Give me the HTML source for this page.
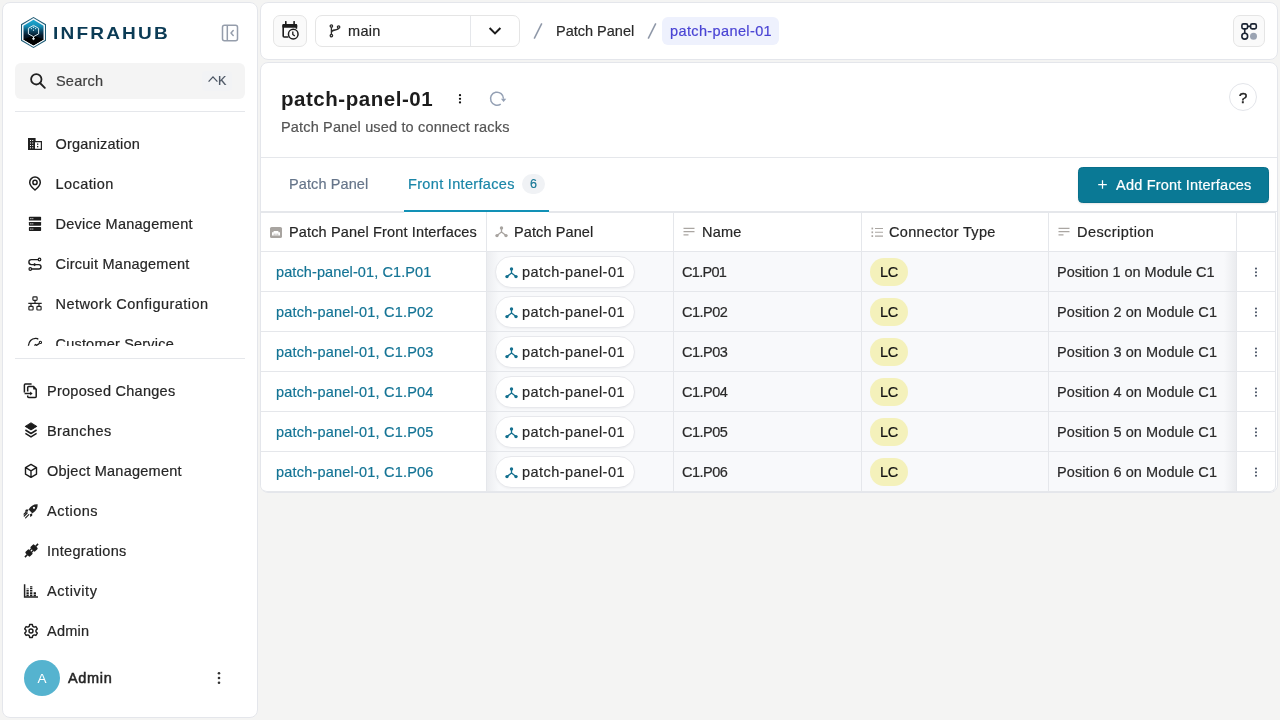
<!DOCTYPE html>
<html><head><meta charset="utf-8">
<style>
*{box-sizing:border-box;margin:0;padding:0}
html,body{width:1280px;height:720px;overflow:hidden}
body{background:#f4f4f3;font-family:"Liberation Sans",sans-serif;color:#262626;position:relative;font-size:14px}
#root{position:absolute;left:0;top:0;width:1280px;height:720px;will-change:transform}
.abs{position:absolute}
.card{position:absolute;background:#fff;border:1px solid #e4e6eb;border-radius:8px;overflow:hidden}
.t{position:absolute;white-space:nowrap;line-height:1;-webkit-text-stroke-width:0.2px}
svg{position:absolute;display:block}
.th{font-size:14.5px;color:#262626;letter-spacing:0.1px}
.td{font-size:14.5px;color:#2a2a2a;letter-spacing:0.1px}
.link{color:#147495}
.nav{font-size:14.5px;color:#262626}
</style></head><body><div id="root">
<!-- SIDEBAR -->
<div class="card" style="left:2px;top:2px;width:256px;height:716px;"></div>
<!-- logo -->
<svg style="left:20px;top:16px" width="27" height="33" viewBox="0 0 27 33">
  <defs><linearGradient id="lg" x1="0" y1="0" x2="0" y2="1">
    <stop offset="0" stop-color="#1aa7d0"/><stop offset="0.25" stop-color="#1690b8"/><stop offset="0.45" stop-color="#0c4461"/><stop offset="0.62" stop-color="#06192a"/><stop offset="1" stop-color="#000"/></linearGradient></defs>
  <polygon points="13.5,1 26,8.3 26,24.7 13.5,32 1,24.7 1,8.3" fill="#1c5a74"/>
  <polygon points="13.5,2.1 25,8.9 25,24.1 13.5,30.9 2,24.1 2,8.9" fill="#f2f8fb"/>
  <polygon points="13.5,3.8 23.5,9.8 23.5,23.2 13.5,29.2 3.5,23.2 3.5,9.8" fill="url(#lg)"/>
  <polygon points="3.5,23.2 3.5,24 13.5,20 23.5,24 23.5,23.2 13.5,29.2" fill="#000"/>
  <path d="M3.5,23.6 L13.5,19.6 L23.5,23.6 L13.5,29.2 Z" fill="#000"/>
  <polygon points="13.5,9.4 18.6,12.3 18.6,17.9 13.5,20.7 8.4,17.9 8.4,12.3" fill="none" stroke="#d8eaf0" stroke-width="1"/>
  <g fill="#e8f3f7"><circle cx="13.5" cy="11.3" r="0.7"/><circle cx="11.4" cy="12.6" r="0.6"/><circle cx="15.6" cy="12.6" r="0.6"/><circle cx="13.5" cy="14.2" r="0.6"/></g>
  <path d="M13.5,20.7 V23.6 M12,22.4 L13.5,23.6 L15,22.4" fill="none" stroke="#e8f3f7" stroke-width="1"/>
</svg>
<div class="t" style="left:53px;top:25px;font-size:17px;font-weight:700;-webkit-text-stroke-width:0;color:#0b3b55;letter-spacing:1.95px;transform:scaleX(1.12);transform-origin:0 0">INFRAHUB</div>
<!-- collapse icon -->
<svg style="left:221px;top:24px" width="18" height="18" viewBox="0 0 18 18">
  <rect x="1.5" y="1.2" width="15" height="15.6" rx="2" fill="none" stroke="#959dab" stroke-width="1.5"/>
  <line x1="6.3" y1="1.2" x2="6.3" y2="16.8" stroke="#959dab" stroke-width="1.5"/>
  <path d="M12.2,6.6 L10,9 L12.2,11.4" fill="none" stroke="#959dab" stroke-width="1.5" stroke-linecap="round" stroke-linejoin="round"/>
</svg>
<!-- search -->
<div class="abs" style="left:15px;top:63px;width:230px;height:36px;background:#f4f4f4;border-radius:6px"></div>
<svg style="left:29px;top:72px" width="18" height="18" viewBox="0 0 18 18">
  <circle cx="7.3" cy="7.3" r="5.2" fill="none" stroke="#222" stroke-width="1.8"/>
  <line x1="11" y1="11" x2="15.8" y2="15.8" stroke="#222" stroke-width="1.9" stroke-linecap="round"/>
</svg>
<div class="t" style="left:56px;top:74px;font-size:14.5px;color:#404040;letter-spacing:0.2px">Search</div>
<div class="abs" style="left:202px;top:71px;width:30px;height:20px;background:#f2f3f5;border-radius:4px"></div>
<svg style="left:207px;top:75px" width="12" height="8" viewBox="0 0 12 8"><path d="M1.6,6.6 L6,1.9 L10.4,6.6" fill="none" stroke="#4b5563" stroke-width="1.3"/></svg>
<div class="t" style="left:218px;top:75px;font-size:12.5px;color:#4b5563">K</div>
<div class="abs" style="left:15px;top:111px;width:230px;height:1px;background:#e5e7eb"></div>

<!-- nav group 1 (clipped) -->
<div class="abs" style="left:2px;top:112px;width:256px;height:234px;overflow:hidden">
 <div class="abs" style="left:-2px;top:-112px;width:260px;height:400px">
  <!-- Organization -->
  <svg style="left:28px;top:138px" width="14" height="12" viewBox="0 0 14 12">
    <path d="M0.6,0.6 H7 V3.6 H13.4 V11.4 H0.6 Z" fill="none" stroke="#222" stroke-width="1.2"/>
    <rect x="0.6" y="0.6" width="6.4" height="10.8" fill="#222"/>
    <g fill="#fff"><rect x="2" y="2" width="1" height="1"/><rect x="4.2" y="2" width="1" height="1"/><rect x="2" y="4.5" width="1" height="1"/><rect x="4.2" y="4.5" width="1" height="1"/><rect x="2" y="7" width="1" height="1"/><rect x="4.2" y="7" width="1" height="1"/><rect x="2" y="9.3" width="1" height="1"/><rect x="4.2" y="9.3" width="1" height="1"/></g>
    <g fill="#222"><rect x="9" y="5.5" width="1.3" height="1.3"/><rect x="9" y="8" width="1.3" height="1.3"/></g>
  </svg>
  <div class="t nav" style="left:55.5px;top:137px;letter-spacing:0.18px">Organization</div>
  <!-- Location -->
  <svg style="left:28px;top:176px" width="14" height="15" viewBox="0 0 14 15">
    <path d="M7,14 C7,14 1.7,9.6 1.7,6.4 A5.3,5.3 0 0 1 12.3,6.4 C12.3,9.6 7,14 7,14 Z" fill="none" stroke="#1c1c1c" stroke-width="1.5"/>
    <circle cx="7" cy="6.4" r="2.1" fill="none" stroke="#1c1c1c" stroke-width="1.5"/>
  </svg>
  <div class="t nav" style="left:55.5px;top:177px;letter-spacing:0.43px">Location</div>
  <!-- Device -->
  <svg style="left:28px;top:216px" width="14" height="16" viewBox="0 0 14 16">
    <g fill="#1c1c1c"><rect x="0.9" y="0.7" width="12.2" height="3.9" rx="0.7"/><rect x="0.9" y="5.9" width="12.2" height="3.9" rx="0.7"/><rect x="0.9" y="11.1" width="12.2" height="3.9" rx="0.7"/></g>
    <g fill="#fff" opacity="0.85"><rect x="2.2" y="2.1" width="1.3" height="1.1"/><rect x="4.3" y="2.1" width="1" height="1.1"/><rect x="2.2" y="7.3" width="1.3" height="1.1"/><rect x="4.3" y="7.3" width="1" height="1.1"/><rect x="2.2" y="12.5" width="1.3" height="1.1"/><rect x="4.3" y="12.5" width="1" height="1.1"/></g>
  </svg>
  <div class="t nav" style="left:55.5px;top:217px;letter-spacing:0.25px">Device Management</div>
  <!-- Circuit -->
  <svg style="left:27px;top:257px" width="16" height="14" viewBox="0 0 16 14">
    <circle cx="12.5" cy="2.5" r="1.3" fill="none" stroke="#1c1c1c" stroke-width="1.2"/>
    <circle cx="3.3" cy="12" r="1.3" fill="none" stroke="#1c1c1c" stroke-width="1.2"/>
    <path d="M11.2,2.6 H4.4 A2.5,2.5 0 0 0 4.4,7.6 H11.8 A2.2,2.2 0 0 1 11.8,12 H4.6" fill="none" stroke="#1c1c1c" stroke-width="1.4"/>
    <path d="M7.6,5.9 L9.3,7.6 L7.6,9.3 L5.9,7.6 Z" fill="#1c1c1c"/>
  </svg>
  <div class="t nav" style="left:55.5px;top:257px;letter-spacing:0.24px">Circuit Management</div>
  <!-- Network -->
  <svg style="left:28px;top:296px" width="14" height="15" viewBox="0 0 14 15">
    <rect x="4.9" y="0.9" width="4.2" height="3.4" rx="0.8" fill="none" stroke="#222" stroke-width="1.2"/>
    <rect x="0.9" y="10.4" width="4.2" height="3.6" rx="0.8" fill="none" stroke="#222" stroke-width="1.2"/>
    <rect x="8.9" y="10.4" width="4.2" height="3.6" rx="0.8" fill="none" stroke="#222" stroke-width="1.2"/>
    <path d="M7,4.3 V7.4 M0.3,7.4 H13.7 M3,7.4 V10.4 M11,7.4 V10.4" fill="none" stroke="#222" stroke-width="1.2"/>
  </svg>
  <div class="t nav" style="left:55.5px;top:297px;letter-spacing:0.45px">Network Configuration</div>
  <!-- Customer service -->
  <svg style="left:27px;top:336px" width="17" height="15" viewBox="0 0 17 15">
    <path d="M1.4,9.8 C1.8,6.2 4,2.6 8.5,2.3 C9.8,2.2 10.8,2.6 11.2,3.4" fill="none" stroke="#1c1c1c" stroke-width="1.3"/>
    <path d="M7.4,9.4 L8.6,8.5 L9.6,9.3 L12.2,7.6" fill="none" stroke="#1c1c1c" stroke-width="1.3"/>
    <circle cx="13.4" cy="6.4" r="1.15" fill="none" stroke="#1c1c1c" stroke-width="1.1"/>
  </svg>
  <div class="t nav" style="left:55.5px;top:337px;letter-spacing:0.2px">Customer Service</div>
 </div>
</div>
<div class="abs" style="left:15px;top:358px;width:230px;height:1px;background:#e5e7eb"></div>

<!-- nav group 2 -->
<!-- Proposed Changes -->
<svg style="left:23px;top:382px" width="16" height="17" viewBox="0 0 16 17">
  <path d="M1.4,10.6 V3 A1,1 0 0 1 2.4,2 H8.6" fill="none" stroke="#1c1c1c" stroke-width="1.5"/>
  <path d="M4.7,9.6 V5.4 A1,1 0 0 1 5.7,4.4 H10.4 L13.2,7.2 V14.6 A1,1 0 0 1 12.2,15.6 H5.7 A1,1 0 0 1 4.7,14.6 V13.6" fill="none" stroke="#1c1c1c" stroke-width="1.5" stroke-linejoin="round"/>
  <path d="M10.2,4.4 L13.2,7.4 H10.2 Z" fill="#1c1c1c"/>
  <path d="M1.6,11.5 H8" stroke="#1c1c1c" stroke-width="1.5"/>
  <path d="M7.2,9.5 L9.6,11.5 L7.2,13.5 Z" fill="#1c1c1c"/>
</svg>
<div class="t nav" style="left:47px;top:384px;letter-spacing:0.27px">Proposed Changes</div>
<!-- Branches -->
<svg style="left:23px;top:422px" width="16" height="17" viewBox="0 0 16 17">
  <path d="M8,0.9 L13.6,4.4 L8,7.9 L2.4,4.4 Z" fill="#1c1c1c" stroke="#1c1c1c" stroke-width="1.1" stroke-linejoin="round"/>
  <path d="M2.4,8 L8,11.5 L13.6,8 M2.4,11.4 L8,14.9 L13.6,11.4" fill="none" stroke="#1c1c1c" stroke-width="1.5" stroke-linejoin="round"/>
</svg>
<div class="t nav" style="left:47px;top:424px;letter-spacing:0.43px">Branches</div>
<!-- Object Management -->
<svg style="left:23px;top:463px" width="16" height="16" viewBox="0 0 16 16">
  <path d="M8,1.4 L13.5,4.6 V11.2 L8,14.4 L2.5,11.2 V4.6 Z M2.7,4.7 L8,7.8 L13.3,4.7 M8,7.8 V14.3" fill="none" stroke="#1c1c1c" stroke-width="1.4" stroke-linejoin="round"/>
</svg>
<div class="t nav" style="left:47px;top:464px;letter-spacing:0.25px">Object Management</div>
<!-- Actions -->
<svg style="left:23px;top:503px" width="16" height="16" viewBox="0 0 16 16">
  <path d="M14.6,1.2 C10.5,1 7.6,3 5.6,6.6 L9.2,10.2 C12.8,8.2 14.9,5.4 14.6,1.2 Z" fill="#222"/>
  <path d="M5.6,6.6 L3,6.6 L1.8,8.6 L4.6,8.8 Z M9.2,10.2 L9.2,12.8 L7.2,14 L7,11.2 Z" fill="#222"/>
  <circle cx="11" cy="4.8" r="1.1" fill="#fff"/>
  <path d="M4.2,10 L1.2,13 M5.8,11.6 L2.6,14.8 M3.2,9 L1,11.2" stroke="#222" stroke-width="1.2" stroke-linecap="round"/>
</svg>
<div class="t nav" style="left:47px;top:504px;letter-spacing:0.5px">Actions</div>
<!-- Integrations -->
<svg style="left:23px;top:542px" width="17" height="17" viewBox="0 0 17 17">
  <g transform="rotate(-45 8.5 8.5)" fill="#1c1c1c">
    <rect x="2.4" y="5.3" width="5" height="6.4" rx="1"/>
    <rect x="9.6" y="5.3" width="5" height="6.4" rx="1"/>
    <rect x="-0.8" y="7.7" width="3.6" height="1.6"/>
    <rect x="14.2" y="7.7" width="3.6" height="1.6"/>
    <rect x="7" y="6.6" width="3" height="1.3"/>
    <rect x="7" y="9.1" width="3" height="1.3"/>
  </g>
</svg>
<div class="t nav" style="left:47px;top:544px;letter-spacing:0.32px">Integrations</div>
<!-- Activity -->
<svg style="left:23px;top:583px" width="16" height="16" viewBox="0 0 16 16">
  <path d="M1.6,1.2 V13.9 H15" fill="none" stroke="#222" stroke-width="1.5"/>
  <g stroke="#1c1c1c" stroke-width="2.3" stroke-dasharray="1.7 0.6"><path d="M4.6,13.2 V5.4"/><path d="M8.2,13.2 V3.2"/><path d="M11.8,13.2 V8.6"/></g>
</svg>
<div class="t nav" style="left:47px;top:584px;letter-spacing:0.57px">Activity</div>
<!-- Admin -->
<svg style="left:23px;top:623px" width="16" height="16" viewBox="0 0 16 16">
  <path d="M6.63,1.54 L9.37,1.54 L9.79,3.33 L11.15,4.11 L12.90,3.58 L14.28,5.96 L12.94,7.22 L12.94,8.78 L14.28,10.04 L12.90,12.42 L11.15,11.89 L9.79,12.67 L9.37,14.46 L6.63,14.46 L6.21,12.67 L4.85,11.89 L3.10,12.42 L1.72,10.04 L3.06,8.78 L3.06,7.22 L1.72,5.96 L3.10,3.58 L4.85,4.11 L6.21,3.33 Z" fill="none" stroke="#1c1c1c" stroke-width="1.4" stroke-linejoin="round"/>
  <circle cx="8" cy="8" r="2" fill="none" stroke="#1c1c1c" stroke-width="1.4"/>
</svg>
<div class="t nav" style="left:47px;top:624px;letter-spacing:0.25px">Admin</div>

<!-- user -->
<div class="abs" style="left:24px;top:660px;width:36px;height:36px;border-radius:50%;background:#55b3cf"></div>
<div class="t" style="left:24px;top:672px;width:36px;text-align:center;font-size:13.5px;color:#fff;-webkit-text-stroke-width:0">A</div>
<div class="t" style="left:68px;top:671px;font-size:14.5px;color:#262626;-webkit-text-stroke-width:0.5px;letter-spacing:0.65px">Admin</div>
<svg style="left:216px;top:671px" width="6" height="14" viewBox="0 0 6 14">
  <g fill="#333"><circle cx="3" cy="2.2" r="1.3"/><circle cx="3" cy="7" r="1.3"/><circle cx="3" cy="11.8" r="1.3"/></g>
</svg>
<!-- HEADER -->
<div class="card" style="left:260px;top:2px;width:1018px;height:58px;"></div>
<!-- calendar btn -->
<div class="abs" style="left:273px;top:15px;width:34px;height:32px;background:#fafafa;border:1px solid #e5e5e5;border-radius:7px"></div>
<svg style="left:282px;top:21px" width="18" height="19" viewBox="0 0 18 19">
  <path d="M6.5,16 H2.2 A1,1 0 0 1 1.2,15 V4.7 A1,1 0 0 1 2.2,3.7 H13.4 A1,1 0 0 1 14.4,4.7 V7.8" fill="none" stroke="#1c1c1c" stroke-width="1.6"/>
  <rect x="0.4" y="2.9" width="14.8" height="3.9" rx="1" fill="#1c1c1c"/>
  <path d="M3.8,0.7 V3.4 M12.1,0.7 V3.4" stroke="#1c1c1c" stroke-width="1.6" stroke-linecap="round"/>
  <circle cx="11.25" cy="13.15" r="4.8" fill="#fafafa" stroke="#1c1c1c" stroke-width="1.5"/>
  <path d="M10.8,10.6 V13.4 L12.8,15" fill="none" stroke="#1c1c1c" stroke-width="1.3"/>
</svg>
<!-- branch select -->
<div class="abs" style="left:315px;top:15px;width:205px;height:32px;background:#fff;border:1px solid #e5e5e5;border-radius:7px"></div>
<div class="abs" style="left:470px;top:16px;width:1px;height:30px;background:#e5e7eb"></div>
<svg style="left:329px;top:24px" width="12" height="14" viewBox="0 0 12 14">
  <g fill="none" stroke="#2a2a2a" stroke-width="1.3">
  <circle cx="2.4" cy="2" r="1.2"/><circle cx="2.4" cy="11.6" r="1.2"/><circle cx="9.6" cy="3" r="1.2"/>
  <path d="M2.4,3.2 V10.4 M2.4,8.6 C2.4,6.6 3.8,6.2 6,6 C8,5.8 9.4,5.6 9.6,4.2"/></g>
</svg>
<div class="t" style="left:348px;top:24px;font-size:14.5px;color:#262626;letter-spacing:0.33px">main</div>
<svg style="left:488px;top:26px" width="14" height="10" viewBox="0 0 14 10">
  <path d="M1.6,2 L7,7.4 L12.4,2" fill="none" stroke="#1c1c1c" stroke-width="2"/>
</svg>
<!-- breadcrumbs -->
<svg style="left:532px;top:22px" width="12" height="18" viewBox="0 0 12 18">
  <line x1="9.8" y1="1.4" x2="2.2" y2="16.6" stroke="#8f98a8" stroke-width="1.5"/>
</svg>
<div class="t" style="left:556px;top:24px;font-size:14.5px;color:#2a2a2a;letter-spacing:0px">Patch Panel</div>
<svg style="left:646px;top:22px" width="12" height="18" viewBox="0 0 12 18">
  <line x1="9.8" y1="1.4" x2="2.2" y2="16.6" stroke="#8f98a8" stroke-width="1.5"/>
</svg>
<div class="abs" style="left:662px;top:17px;width:117px;height:28px;background:#eef1fd;border-radius:6px"></div>
<div class="t" style="left:670px;top:24px;font-size:14.5px;color:#4a44d4;letter-spacing:0.38px">patch-panel-01</div>
<!-- right btn -->
<div class="abs" style="left:1233px;top:15px;width:32px;height:32px;background:#fafafa;border:1px solid #e5e5e5;border-radius:7px"></div>
<svg style="left:1240px;top:22px" width="18" height="18" viewBox="0 0 18 18">
  <g fill="none" stroke="#1b2433" stroke-width="1.6">
  <rect x="1.9" y="1.9" width="5.7" height="5" rx="1.6"/>
  <rect x="10.6" y="1.9" width="5.7" height="5" rx="1.6"/>
  <circle cx="4.75" cy="14.2" r="2.9"/>
  <path d="M7.6,4.4 H10.6 M4.75,6.9 V11.3"/></g>
  <circle cx="13.5" cy="14.2" r="3.5" fill="#9aa3b2"/>
</svg>
<!-- MAIN -->
<div class="card" style="left:260px;top:62px;width:1018px;height:431px;"></div>
<div class="t" style="left:281px;top:89px;font-size:20.5px;font-weight:700;-webkit-text-stroke-width:0;color:#1c1c1c;letter-spacing:0.54px">patch-panel-01</div>
<svg style="left:457px;top:92px" width="6" height="14" viewBox="0 0 6 14">
  <g fill="#111"><circle cx="3" cy="3.2" r="1.15"/><circle cx="3" cy="6.8" r="1.15"/><circle cx="3" cy="10.4" r="1.15"/></g>
</svg>
<svg style="left:488px;top:89px" width="20" height="19" viewBox="0 0 20 19">
  <path d="M12.73,15.02 A6.5,6.5 0 1 1 15.5,9.7" fill="none" stroke="#94a0b4" stroke-width="1.5"/>
  <path d="M12.9,9.7 L18.3,9.7 L15.6,12.9 Z" fill="#94a0b4"/>
</svg>
<div class="t" style="left:281px;top:120px;font-size:14.5px;color:#555;letter-spacing:0.16px">Patch Panel used to connect racks</div>
<div class="abs" style="left:1229px;top:83px;width:28px;height:28px;border:1px solid #e3e5ea;border-radius:50%;background:#fff"></div>
<div class="t" style="left:1229px;top:90px;width:28px;text-align:center;font-size:15.5px;color:#222;-webkit-text-stroke-width:0.4px">?</div>
<div class="abs" style="left:261px;top:157px;width:1016px;height:1px;background:#e5e7eb"></div>

<!-- tabs -->
<div class="t" style="left:289px;top:177px;font-size:14.5px;color:#66758a;letter-spacing:0.1px">Patch Panel</div>
<div class="t" style="left:408px;top:177px;font-size:14.5px;color:#1a86a8;letter-spacing:0.33px">Front Interfaces</div>
<div class="abs" style="left:522px;top:174px;width:23px;height:20px;border-radius:10px;background:#f0f2f5"></div>
<div class="t" style="left:522px;top:178px;width:23px;text-align:center;font-size:12.5px;color:#1a7a98">6</div>
<div class="abs" style="left:261px;top:211px;width:1016px;height:1px;background:#e5e7eb"></div>
<div class="abs" style="left:404px;top:210px;width:145px;height:2px;background:#1291b6"></div>

<!-- add button -->
<div class="abs" style="left:1078px;top:167px;width:191px;height:36px;border-radius:4.5px;background:#0a7995;border:1px solid #086f8b;box-shadow:0 1px 2px rgba(0,0,0,0.1)"></div>
<svg style="left:1097px;top:179px" width="11" height="11" viewBox="0 0 11 11">
  <path d="M5.5,1.2 V9.8 M1.2,5.5 H9.8" stroke="#fff" stroke-width="1.25"/>
</svg>
<div class="t" style="left:1116px;top:178px;font-size:14.5px;color:#fff;letter-spacing:0.21px">Add Front Interfaces</div>

<!-- table -->
<div class="abs" id="tbl" style="left:261px;top:212px;width:1015px;height:280px;overflow:hidden;background:#fff;border-right:1px solid #e5e7eb;border-bottom:1px solid #e5e7eb;border-radius:0 0 6px 6px">
<div class="abs" style="left:226px;top:40px;width:749px;height:240px;background:#f8f9fb"></div>
<div class="abs" style="left:226px;top:40px;width:12px;height:240px;background:linear-gradient(90deg,rgba(15,23,42,0.05),rgba(15,23,42,0))"></div>
<div class="abs" style="left:963px;top:40px;width:12px;height:240px;background:linear-gradient(270deg,rgba(15,23,42,0.06),rgba(15,23,42,0))"></div>
<div class="abs" style="left:0;top:0;width:143px;height:1px;background:#e5e7eb"></div>
<div class="abs" style="left:288px;top:0;width:727px;height:1px;background:#e5e7eb"></div>
<div class="abs" style="left:0;top:39px;width:1015px;height:1px;background:#e5e7eb"></div>
<div class="abs" style="left:0;top:79px;width:1015px;height:1px;background:#e5e7eb"></div>
<div class="abs" style="left:0;top:119px;width:1015px;height:1px;background:#e5e7eb"></div>
<div class="abs" style="left:0;top:159px;width:1015px;height:1px;background:#e5e7eb"></div>
<div class="abs" style="left:0;top:199px;width:1015px;height:1px;background:#e5e7eb"></div>
<div class="abs" style="left:0;top:239px;width:1015px;height:1px;background:#e5e7eb"></div>
<div class="abs" style="left:225px;top:0;width:1px;height:280px;background:#e5e7eb"></div>
<div class="abs" style="left:412px;top:0;width:1px;height:280px;background:#e5e7eb"></div>
<div class="abs" style="left:600px;top:0;width:1px;height:280px;background:#e5e7eb"></div>
<div class="abs" style="left:787px;top:0;width:1px;height:280px;background:#e5e7eb"></div>
<div class="abs" style="left:975px;top:0;width:1px;height:280px;background:#e5e7eb"></div>
<svg style="left:8px;top:14px" width="14" height="13" viewBox="0 0 14 13">
<rect x="1" y="1" width="12" height="11" rx="1.6" fill="#a8a4a0"/>
<path d="M3,9.5 V6.2 H4.6 V5 H9.4 V6.2 H11 V9.5 Z" fill="#fff"/>
<path d="M5.2,9.5 V7.6 M7,9.5 V7.6 M8.8,9.5 V7.6" stroke="#a8a4a0" stroke-width="0.7"/>
</svg>
<div class="t th" style="left:28px;top:13px;letter-spacing:0.15px">Patch Panel Front Interfaces</div>
<svg style="left:234px;top:14px" width="13" height="12" viewBox="0 0 13 12">
<g fill="#a8a4a0"><circle cx="6.5" cy="2" r="1.7"/><circle cx="2" cy="9.6" r="1.7"/><circle cx="11" cy="9.6" r="1.7"/></g>
<path d="M6.5,2 V6 L2,9.6 M6.5,6 L11,9.6" fill="none" stroke="#a8a4a0" stroke-width="1.3"/>
</svg>
<div class="t th" style="left:253px;top:13px;letter-spacing:0.1px">Patch Panel</div>
<svg style="left:422px;top:15px" width="13" height="10" viewBox="0 0 13 10">
<path d="M0.5,1.4 H11.5 M0.5,4.6 H11.5 M0.5,7.8 H5.5" stroke="#aaa6a2" stroke-width="1.3"/>
</svg>
<div class="t th" style="left:441px;top:13px;letter-spacing:0.23px">Name</div>
<svg style="left:610px;top:15px" width="13" height="11" viewBox="0 0 13 11">
<g fill="#aaa6a2"><rect x="0.5" y="0.6" width="1.6" height="1.8"/><rect x="0.5" y="4.4" width="1.6" height="1.8"/><rect x="0.5" y="8.2" width="1.6" height="1.8"/></g>
<path d="M4,1.5 H12 M4,5.3 H12 M4,9.1 H12" stroke="#aaa6a2" stroke-width="1.1"/>
</svg>
<div class="t th" style="left:628px;top:13px;letter-spacing:0.33px">Connector Type</div>
<svg style="left:797px;top:15px" width="13" height="10" viewBox="0 0 13 10">
<path d="M0.5,1.4 H11.5 M0.5,4.6 H11.5 M0.5,7.8 H5.5" stroke="#aaa6a2" stroke-width="1.3"/>
</svg>
<div class="t th" style="left:816px;top:13px;letter-spacing:0.44px">Description</div>
<div class="t td link" style="left:15px;top:53px;letter-spacing:0.1px">patch-panel-01, C1.P01</div>
<div class="abs" style="left:234px;top:44px;width:140px;height:32px;border:1px solid #e7e8ec;border-radius:16px;background:#fff;box-shadow:0 1px 2px rgba(0,0,0,0.04)"></div>
<svg style="left:244px;top:55px" width="13" height="12" viewBox="0 0 13 12">
<g fill="#14708f"><circle cx="6.5" cy="2" r="1.7"/><circle cx="2" cy="9.6" r="1.7"/><circle cx="11" cy="9.6" r="1.7"/></g>
<path d="M6.5,2 V6 L2,9.6 M6.5,6 L11,9.6" fill="none" stroke="#14708f" stroke-width="1.3"/>
</svg>
<div class="t td" style="left:261px;top:53px;letter-spacing:0.44px">patch-panel-01</div>
<div class="t td" style="left:421px;top:53px;letter-spacing:-0.7px">C1.P01</div>
<div class="abs" style="left:609px;top:46px;width:38px;height:28px;border-radius:14px;background:#f4f1bb"></div>
<div class="t td" style="left:609px;top:53px;width:38px;text-align:center;color:#111;letter-spacing:-0.3px">LC</div>
<div class="t td" style="left:796px;top:53px;letter-spacing:-0.02px">Position 1 on Module C1</div>
<svg style="left:992px;top:54px" width="6" height="12" viewBox="0 0 6 12">
<g fill="#4b5567"><circle cx="3" cy="2.6" r="1.05"/><circle cx="3" cy="6.2" r="1.05"/><circle cx="3" cy="9.8" r="1.05"/></g></svg>
<div class="t td link" style="left:15px;top:93px;letter-spacing:0.2px">patch-panel-01, C1.P02</div>
<div class="abs" style="left:234px;top:84px;width:140px;height:32px;border:1px solid #e7e8ec;border-radius:16px;background:#fff;box-shadow:0 1px 2px rgba(0,0,0,0.04)"></div>
<svg style="left:244px;top:95px" width="13" height="12" viewBox="0 0 13 12">
<g fill="#14708f"><circle cx="6.5" cy="2" r="1.7"/><circle cx="2" cy="9.6" r="1.7"/><circle cx="11" cy="9.6" r="1.7"/></g>
<path d="M6.5,2 V6 L2,9.6 M6.5,6 L11,9.6" fill="none" stroke="#14708f" stroke-width="1.3"/>
</svg>
<div class="t td" style="left:261px;top:93px;letter-spacing:0.44px">patch-panel-01</div>
<div class="t td" style="left:421px;top:93px;letter-spacing:-0.5px">C1.P02</div>
<div class="abs" style="left:609px;top:86px;width:38px;height:28px;border-radius:14px;background:#f4f1bb"></div>
<div class="t td" style="left:609px;top:93px;width:38px;text-align:center;color:#111;letter-spacing:-0.3px">LC</div>
<div class="t td" style="left:796px;top:93px;letter-spacing:0.09px">Position 2 on Module C1</div>
<svg style="left:992px;top:94px" width="6" height="12" viewBox="0 0 6 12">
<g fill="#4b5567"><circle cx="3" cy="2.6" r="1.05"/><circle cx="3" cy="6.2" r="1.05"/><circle cx="3" cy="9.8" r="1.05"/></g></svg>
<div class="t td link" style="left:15px;top:133px;letter-spacing:0.2px">patch-panel-01, C1.P03</div>
<div class="abs" style="left:234px;top:124px;width:140px;height:32px;border:1px solid #e7e8ec;border-radius:16px;background:#fff;box-shadow:0 1px 2px rgba(0,0,0,0.04)"></div>
<svg style="left:244px;top:135px" width="13" height="12" viewBox="0 0 13 12">
<g fill="#14708f"><circle cx="6.5" cy="2" r="1.7"/><circle cx="2" cy="9.6" r="1.7"/><circle cx="11" cy="9.6" r="1.7"/></g>
<path d="M6.5,2 V6 L2,9.6 M6.5,6 L11,9.6" fill="none" stroke="#14708f" stroke-width="1.3"/>
</svg>
<div class="t td" style="left:261px;top:133px;letter-spacing:0.44px">patch-panel-01</div>
<div class="t td" style="left:421px;top:133px;letter-spacing:-0.5px">C1.P03</div>
<div class="abs" style="left:609px;top:126px;width:38px;height:28px;border-radius:14px;background:#f4f1bb"></div>
<div class="t td" style="left:609px;top:133px;width:38px;text-align:center;color:#111;letter-spacing:-0.3px">LC</div>
<div class="t td" style="left:796px;top:133px;letter-spacing:0.09px">Position 3 on Module C1</div>
<svg style="left:992px;top:134px" width="6" height="12" viewBox="0 0 6 12">
<g fill="#4b5567"><circle cx="3" cy="2.6" r="1.05"/><circle cx="3" cy="6.2" r="1.05"/><circle cx="3" cy="9.8" r="1.05"/></g></svg>
<div class="t td link" style="left:15px;top:173px;letter-spacing:0.2px">patch-panel-01, C1.P04</div>
<div class="abs" style="left:234px;top:164px;width:140px;height:32px;border:1px solid #e7e8ec;border-radius:16px;background:#fff;box-shadow:0 1px 2px rgba(0,0,0,0.04)"></div>
<svg style="left:244px;top:175px" width="13" height="12" viewBox="0 0 13 12">
<g fill="#14708f"><circle cx="6.5" cy="2" r="1.7"/><circle cx="2" cy="9.6" r="1.7"/><circle cx="11" cy="9.6" r="1.7"/></g>
<path d="M6.5,2 V6 L2,9.6 M6.5,6 L11,9.6" fill="none" stroke="#14708f" stroke-width="1.3"/>
</svg>
<div class="t td" style="left:261px;top:173px;letter-spacing:0.44px">patch-panel-01</div>
<div class="t td" style="left:421px;top:173px;letter-spacing:-0.5px">C1.P04</div>
<div class="abs" style="left:609px;top:166px;width:38px;height:28px;border-radius:14px;background:#f4f1bb"></div>
<div class="t td" style="left:609px;top:173px;width:38px;text-align:center;color:#111;letter-spacing:-0.3px">LC</div>
<div class="t td" style="left:796px;top:173px;letter-spacing:0.09px">Position 4 on Module C1</div>
<svg style="left:992px;top:174px" width="6" height="12" viewBox="0 0 6 12">
<g fill="#4b5567"><circle cx="3" cy="2.6" r="1.05"/><circle cx="3" cy="6.2" r="1.05"/><circle cx="3" cy="9.8" r="1.05"/></g></svg>
<div class="t td link" style="left:15px;top:213px;letter-spacing:0.2px">patch-panel-01, C1.P05</div>
<div class="abs" style="left:234px;top:204px;width:140px;height:32px;border:1px solid #e7e8ec;border-radius:16px;background:#fff;box-shadow:0 1px 2px rgba(0,0,0,0.04)"></div>
<svg style="left:244px;top:215px" width="13" height="12" viewBox="0 0 13 12">
<g fill="#14708f"><circle cx="6.5" cy="2" r="1.7"/><circle cx="2" cy="9.6" r="1.7"/><circle cx="11" cy="9.6" r="1.7"/></g>
<path d="M6.5,2 V6 L2,9.6 M6.5,6 L11,9.6" fill="none" stroke="#14708f" stroke-width="1.3"/>
</svg>
<div class="t td" style="left:261px;top:213px;letter-spacing:0.44px">patch-panel-01</div>
<div class="t td" style="left:421px;top:213px;letter-spacing:-0.5px">C1.P05</div>
<div class="abs" style="left:609px;top:206px;width:38px;height:28px;border-radius:14px;background:#f4f1bb"></div>
<div class="t td" style="left:609px;top:213px;width:38px;text-align:center;color:#111;letter-spacing:-0.3px">LC</div>
<div class="t td" style="left:796px;top:213px;letter-spacing:0.09px">Position 5 on Module C1</div>
<svg style="left:992px;top:214px" width="6" height="12" viewBox="0 0 6 12">
<g fill="#4b5567"><circle cx="3" cy="2.6" r="1.05"/><circle cx="3" cy="6.2" r="1.05"/><circle cx="3" cy="9.8" r="1.05"/></g></svg>
<div class="t td link" style="left:15px;top:253px;letter-spacing:0.2px">patch-panel-01, C1.P06</div>
<div class="abs" style="left:234px;top:244px;width:140px;height:32px;border:1px solid #e7e8ec;border-radius:16px;background:#fff;box-shadow:0 1px 2px rgba(0,0,0,0.04)"></div>
<svg style="left:244px;top:255px" width="13" height="12" viewBox="0 0 13 12">
<g fill="#14708f"><circle cx="6.5" cy="2" r="1.7"/><circle cx="2" cy="9.6" r="1.7"/><circle cx="11" cy="9.6" r="1.7"/></g>
<path d="M6.5,2 V6 L2,9.6 M6.5,6 L11,9.6" fill="none" stroke="#14708f" stroke-width="1.3"/>
</svg>
<div class="t td" style="left:261px;top:253px;letter-spacing:0.44px">patch-panel-01</div>
<div class="t td" style="left:421px;top:253px;letter-spacing:-0.5px">C1.P06</div>
<div class="abs" style="left:609px;top:246px;width:38px;height:28px;border-radius:14px;background:#f4f1bb"></div>
<div class="t td" style="left:609px;top:253px;width:38px;text-align:center;color:#111;letter-spacing:-0.3px">LC</div>
<div class="t td" style="left:796px;top:253px;letter-spacing:0.09px">Position 6 on Module C1</div>
<svg style="left:992px;top:254px" width="6" height="12" viewBox="0 0 6 12">
<g fill="#4b5567"><circle cx="3" cy="2.6" r="1.05"/><circle cx="3" cy="6.2" r="1.05"/><circle cx="3" cy="9.8" r="1.05"/></g></svg>
</div>
</div></body></html>
